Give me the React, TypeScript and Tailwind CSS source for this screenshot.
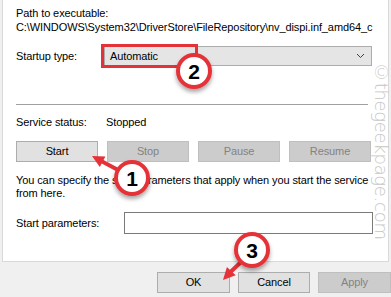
import type { FC } from 'react'

const Chevron: FC = () => (
    <svg width="9" height="6" viewBox="0 0 9 6" className="shrink-0">
        <path d="M1 1l3.5 3.5L8 1" fill="none" stroke="#404040" strokeWidth="1" />
    </svg>
)

const Badge: FC<{ cx: number; cy: number; n: string }> = ({ cx, cy, n }) => (
    <g>
        <circle cx={cx} cy={cy} r={16} fill="#fff" stroke="#e53238" strokeWidth={4} filter="url(#shadow)" />
        <text
            x={cx}
            y={cy + 7.5}
            textAnchor="middle"
            fontFamily="Liberation Sans, Arial, sans-serif"
            fontWeight="bold"
            fontSize="21"
            fill="#000">
            {n}
        </text>
    </g>
)

const App: FC = () => {
    return (
        <div className="relative w-[391px] h-[297px] overflow-hidden bg-[#f0f0f0] font-['Liberation_Sans',Arial,sans-serif] text-[11px] tracking-[-0.1px] text-black">
            {/* white tab page */}
            <div className="ml-[2px] w-[387px] h-[262px] bg-white border-x border-b border-[#d9d9d9] pl-[13px] flex flex-col">
                <p className="mt-[6px] leading-[14px]">Path to executable:</p>
                <p className="leading-[14px] w-[357px] overflow-hidden whitespace-nowrap">
                    C:\WINDOWS\System32\DriverStore\FileRepository\nv_dispi.inf_amd64_c
                </p>

                <div className="mt-[12px] flex items-center h-[20px]">
                    <span className="w-[88px]">Startup type:</span>
                    <div className="w-[268px] h-[20px] bg-[#e5e5e5] border border-[#acacac] flex items-center justify-between pl-[5px] pr-[6px]">
                        <span>Automatic</span>
                        <Chevron />
                    </div>
                </div>

                <div className="mt-[38px] h-px w-[352px] bg-[#a0a0a0]" />

                <div className="mt-[10px] flex leading-[14px]">
                    <span className="w-[90px]">Service status:</span>
                    <span>Stopped</span>
                </div>

                <div className="mt-[12px] flex gap-[9px]">
                    <div className="w-[82px] h-[21px] flex items-center justify-center bg-[#e1e1e1] border border-[#adadad]">Start</div>
                    <div className="w-[82px] h-[21px] flex items-center justify-center bg-[#cccccc] border border-[#bfbfbf] text-[#838383]">Stop</div>
                    <div className="w-[82px] h-[21px] flex items-center justify-center bg-[#cccccc] border border-[#bfbfbf] text-[#838383]">Pause</div>
                    <div className="w-[82px] h-[21px] flex items-center justify-center bg-[#cccccc] border border-[#bfbfbf] text-[#838383]">Resume</div>
                </div>

                <p className="mt-[12px] leading-[13px] w-[360px]">
                    You can specify the start parameters that apply when you start the service from here.
                </p>

                <div className="mt-[12px] flex items-center">
                    <span className="w-[108px]">Start parameters:</span>
                    <div className="w-[249px] h-[22px] border border-[#7a7a7a] bg-white" />
                </div>
            </div>

            {/* footer buttons */}
            <div className="mt-[10px] flex gap-[8px] pl-[157px]">
                <div className="shrink-0 w-[73px] h-[21px] flex items-center justify-center bg-[#e1e1e1] border border-[#adadad]">OK</div>
                <div className="shrink-0 w-[72px] h-[21px] flex items-center justify-center bg-[#e1e1e1] border border-[#adadad]">Cancel</div>
                <div className="shrink-0 w-[73px] h-[21px] flex items-center justify-center bg-[#cccccc] border border-[#bfbfbf] text-[#838383]">Apply</div>
            </div>

            {/* watermark */}
            <div className="absolute left-[373px] top-[62px] [writing-mode:vertical-rl] text-[18px] leading-[17px] text-[#c6c6c6] font-['DejaVu_Sans',sans-serif] font-light tracking-[-0.3px]">
                ©thegeekpage.com
            </div>

            {/* annotations */}
            <svg className="absolute inset-0 pointer-events-none" width="391" height="297" viewBox="0 0 391 297">
                <defs>
                    <filter id="shadow" x="-50%" y="-50%" width="200%" height="200%">
                        <feDropShadow dx="0" dy="3" stdDeviation="2" floodColor="#000" floodOpacity="0.35" />
                    </filter>
                </defs>

                <rect x="102.5" y="45.5" width="94" height="21" fill="none" stroke="#e53238" strokeWidth="3" />

                <line x1="120" y1="171" x2="102.6" y2="161.7" stroke="#e53238" strokeWidth="4" strokeLinecap="round" />
                <polygon points="92,156 105.4,156.4 99.8,167" fill="#e53238" />

                <line x1="241" y1="262" x2="231.3" y2="271.2" stroke="#e53238" strokeWidth="4" strokeLinecap="round" />
                <polygon points="223,280 235.7,275.3 226.9,267.1" fill="#e53238" />

                <Badge cx={194} cy={71} n="2" />
                <Badge cx={132} cy={178} n="1" />
                <Badge cx={252} cy={250} n="3" />
            </svg>
        </div>
    )
}

export default App
